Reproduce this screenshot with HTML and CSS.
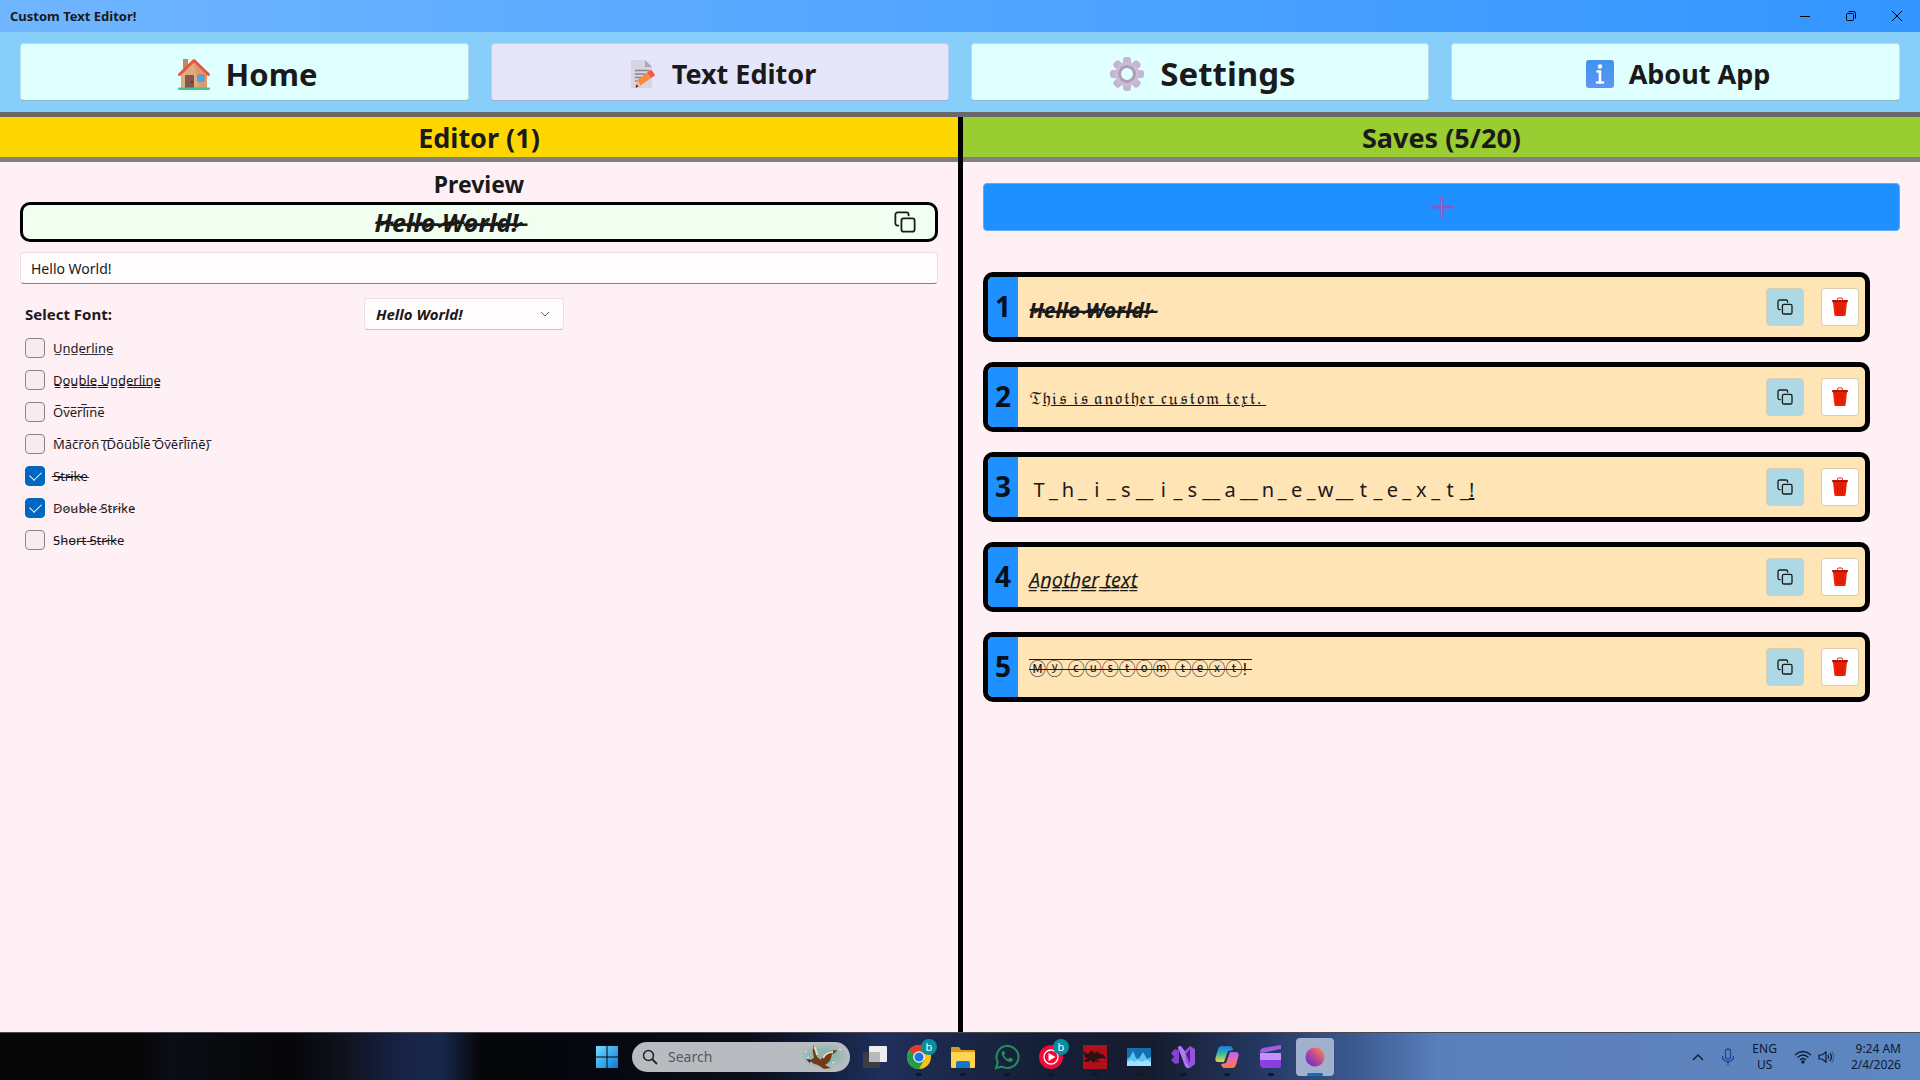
FILE: index.html
```html
<!DOCTYPE html>
<html lang="en">
<head>
<meta charset="utf-8">
<title>Custom Text Editor!</title>
<link rel="stylesheet" href="styles.css">
</head>
<body>
<svg class="defs" aria-hidden="true">
  <symbol id="copy" viewBox="0 0 16 16"><path d="M3.2 10.6H2.6A1.6 1.6 0 0 1 1 9V2.600A1.600 1.600 0 0 1 2.600 1H9a1.600 1.600 0 0 1 1.600 1.600v.6" fill="none" stroke="currentColor" stroke-width="1.300" stroke-linecap="round"/><rect x="5.400" y="5.400" width="9.600" height="9.600" rx="1.600" fill="none" stroke="currentColor" stroke-width="1.300"/></symbol>
  <symbol id="trash" viewBox="0 0 18 20"><path d="M6.500 3.500V2.200Q6.500 1 7.700 1h2.600q1.200 0 1.200 1.200v1.300" fill="none" stroke="#e0201a" stroke-width="1"/><path d="M2 5h14l-1.400 13q-.1 1-1.200 1H4.600q-1.100 0-1.200-1z" fill="#f12000"/><path d="M6.200 7l.5 10M9 7v10M11.800 7l-.5 10" stroke="#c81a05" stroke-width="1"/><rect x="1" y="3" width="16" height="2.200" rx="1" fill="#b5160a"/></symbol>
</svg>
<div class="window">
  <header class="titlebar">
    <span>Custom Text Editor!</span>
    <div class="window-controls">
      <button aria-label="Minimize"><svg width="12" height="12" viewBox="0 0 12 12"><path d="M1 6.500h10" stroke="#000"/></svg></button>
      <button aria-label="Restore"><svg width="12" height="12" viewBox="0 0 12 12" fill="none" stroke="#000"><rect x="1.500" y="3.500" width="7" height="7" rx="1"/><path d="M3.500 1.500h5q2 0 2 2v5"/></svg></button>
      <button aria-label="Close"><svg width="12" height="12" viewBox="0 0 12 12"><path d="M1 1l10 10M11 1L1 11" stroke="#000"/></svg></button>
    </div>
  </header>
  <nav class="nav">
    <button class="nav-button large"><svg width="34" height="34" viewBox="0 0 34 34"><path d="M6 2h5v12H6z" fill="#c38a62"/><path d="M4 17L17 5l13 12v14H4z" fill="#dfab80"/><path d="M17 5l13 12v14h-8z" fill="#d79c70"/><path d="M2.500 17.500L17 3.500l14.500 14" fill="none" stroke="#e6553f" stroke-width="3" stroke-linecap="round" stroke-linejoin="round"/><path d="M8 31V19q0-1 1-1h7q1 0 1 1v12z" fill="#84564c"/><circle cx="15" cy="25" r="1" fill="#4e2f2b"/><rect x="20.500" y="17.500" width="7" height="7" rx="1" fill="#3fa9f2" stroke="#c9835c"/><rect x="1" y="30.500" width="32" height="2.500" rx="1" fill="#43c590"/></svg>Home</button>
    <button class="nav-button selected"><svg width="28" height="30" viewBox="0 0 28 30"><path d="M2 1h14l7 7v21H2z" fill="#d8d5e0"/><path d="M16 1l7 7h-7z" fill="#aba5b5"/><path d="M6 11.500h14M6 15h12M6 18.500h8M6 22h6" stroke="#7f8794" stroke-width="1.400"/><path d="M7 28l1.500-7L18 13.500l4 5.500-11 8z" fill="#fb8a3c"/><path d="M7 28l1.500-7 3 5.500z" fill="#f8c28f"/><path d="M18 13.500l3.500-2.500q2 0 4.500 5.500L22 19z" fill="#f9573f"/><path d="M6.500 29l1-4 2 2.500z" fill="#4a3540"/></svg>Text Editor</button>
    <button class="nav-button larger"><svg width="36" height="36" viewBox="0 0 36 36"><g fill="#c4b6d2"><rect x="14" y="1" width="8" height="34" rx="3"/><rect x="14" y="1" width="8" height="34" rx="3" transform="rotate(45 18 18)"/><rect x="14" y="1" width="8" height="34" rx="3" transform="rotate(90 18 18)"/><rect x="14" y="1" width="8" height="34" rx="3" transform="rotate(135 18 18)"/></g><circle cx="18" cy="18" r="12" fill="#cabdd8"/><circle cx="18" cy="18" r="7.500" fill="#e0ffff" stroke="#ab9fb6" stroke-width="3"/></svg>Settings</button>
    <button class="nav-button"><svg width="28" height="28" viewBox="0 0 28 28"><defs><linearGradient id="info" x2="0" y2="1"><stop stop-color="#3f93ea"/><stop offset="1" stop-color="#5b95f5"/></linearGradient></defs><rect width="28" height="28" rx="3" fill="url(#info)"/><circle cx="14" cy="6.500" r="2.200" fill="#fff"/><path d="M11.500 11.500H14v11M11 22.500h6" fill="none" stroke="#fff" stroke-width="2.600" stroke-linecap="round"/></svg>About App</button>
  </nav>
  <main class="panes">
    <section class="pane">
      <h2 class="pane-title gold">Editor (1)</h2>
      <div class="editor">
        <h3>Preview</h3>
        <div class="preview"><output data-marks="&#x336;&#x337;">Hello World!</output><button aria-label="Copy preview"><svg width="22" height="22"><use href="#copy"/></svg></button></div>
        <input class="source" type="text" value="Hello World!" aria-label="Text">
        <div class="font-row">
          <label for="font">Select Font:</label>
          <div class="select"><select id="font"><option>Hello World!</option></select><svg width="10" height="6" viewBox="0 0 10 6"><path d="M1 1l4 4 4-4" fill="none" stroke="#666"/></svg></div>
        </div>
        <div class="options">
          <label><input type="checkbox"><span data-marks="&#x332;">Underline</span></label>
          <label><input type="checkbox"><span data-marks="&#x333;">Double Underline</span></label>
          <label><input type="checkbox"><span data-marks="&#x305;">Overline</span></label>
          <label><input type="checkbox"><span data-marks="&#x304;">Macron (Double Overline)</span></label>
          <label><input type="checkbox" checked><span data-marks="&#x336;">Strike</span></label>
          <label><input type="checkbox" checked><span data-marks="&#x337;">Double Strike</span></label>
          <label><input type="checkbox"><span data-marks="&#x335;">Short Strike</span></label>
        </div>
      </div>
    </section>
    <section class="pane saves-pane">
      <h2 class="pane-title green">Saves (5/20)</h2>
      <div class="saves">
        <button class="add" aria-label="Add"><svg width="24" height="24" viewBox="0 0 24 24"><path d="M12 2v20M2 12h20" stroke="#8659c4" stroke-width="3" stroke-linecap="round"/><path d="M11.500 2v20" stroke="#a56fc0" stroke-width="1"/></svg></button>
        <ol class="cards">
          <li class="card"><b>1</b><span class="text bold-italic" data-marks="&#x336;&#x337;">Hello World!</span><button class="copy" aria-label="Copy"><svg width="16" height="16"><use href="#copy"/></svg></button><button class="delete" aria-label="Delete"><svg width="18" height="20"><use href="#trash"/></svg></button></li>
          <li class="card"><b>2</b><span class="text fraktur">𝔗<u>𝔥𝔦𝔰 𝔦𝔰 𝔞𝔫𝔬𝔱𝔥𝔢𝔯 𝔠𝔲𝔰𝔱𝔬𝔪 𝔱𝔢𝔵𝔱. </u></span><button class="copy" aria-label="Copy"><svg width="16" height="16"><use href="#copy"/></svg></button><button class="delete" aria-label="Delete"><svg width="18" height="20"><use href="#trash"/></svg></button></li>
          <li class="card"><b>3</b><span class="text" data-cells>T_h_i_s__i_s__a__n_e_w__t_e_x_t_!</span><button class="copy" aria-label="Copy"><svg width="16" height="16"><use href="#copy"/></svg></button><button class="delete" aria-label="Delete"><svg width="18" height="20"><use href="#trash"/></svg></button></li>
          <li class="card"><b>4</b><span class="text italic" data-marks="&#x333;">Another text</span><button class="copy" aria-label="Copy"><svg width="16" height="16"><use href="#copy"/></svg></button><button class="delete" aria-label="Delete"><svg width="18" height="20"><use href="#trash"/></svg></button></li>
          <li class="card"><b>5</b><span class="text circled"><s>Ⓜⓨ ⓒⓤⓢⓣⓞⓜ ⓣⓔⓧⓣ! </s></span><button class="copy" aria-label="Copy"><svg width="16" height="16"><use href="#copy"/></svg></button><button class="delete" aria-label="Delete"><svg width="18" height="20"><use href="#trash"/></svg></button></li>
        </ol>
      </div>
    </section>
  </main>
</div>
<footer class="taskbar">
  <div></div>
  <div class="apps">
    <button class="app" aria-label="Start"><svg width="24" height="24" viewBox="0 0 24 24"><defs><linearGradient id="win" x2="1" y2="1"><stop stop-color="#6fdcff"/><stop offset="1" stop-color="#0a7bdc"/></linearGradient></defs><path d="M1 1h10.500v10.500H1zM12.500 1H23v10.500H12.500zM1 12.500h10.500V23H1zM12.500 12.500H23V23H12.500z" fill="url(#win)"/></svg></button>
    <label class="search"><svg width="16" height="16" viewBox="0 0 16 16"><circle cx="6.500" cy="6.500" r="5" fill="none" stroke="#222" stroke-width="1.500"/><path d="M10 10l5 5" stroke="#222" stroke-width="1.800"/></svg><input type="text" placeholder="Search"><svg width="48" height="28" viewBox="0 0 48 28"><defs><radialGradient id="sky"><stop offset=".5" stop-color="#8bb7b1"/><stop offset="1" stop-color="#8bb7b1" stop-opacity="0"/></radialGradient></defs><ellipse cx="25" cy="13" rx="24" ry="13" fill="url(#sky)"/><path d="M6 8l2 1M8 15l2-1M40 6l2 1M33 20l3-1" stroke="#d7eeea"/><path d="M14 2q3 5 4 12l4 3q2-9 16-10-1 3-5 4-1 8-7 11l6 3-7 1-6-4q-6-1-8-5l4-2q-2-7-1-13z" fill="#743919"/><path d="M18 12q-1-6-3-8M24 15q3-6 10-6" stroke="#f0d9bd" stroke-width="2" fill="none"/><path d="M12 17l-5-1 4 4z" fill="#35190f"/></svg></label>
    <button class="app" aria-label="Task view"><svg width="24" height="24" viewBox="0 0 24 24"><rect y="7" width="17" height="16" rx="1" fill="#3b3d42"/><rect x="6" y="1" width="18" height="16" rx="1" fill="#eee"/><rect x="6" y="7" width="11" height="10" fill="#b9b9bb"/></svg></button>
    <button class="app running" aria-label="Chrome"><svg width="24" height="24" viewBox="0 0 24 24"><circle cx="12" cy="12" r="12" fill="#fbc116"/><path d="M12 12L1.600 6A12 12 0 0 1 22.400 6z" fill="#e33b2e"/><path d="M12 12L1.600 6A12 12 0 0 0 12 24l5.200-9z" fill="#229b4b"/><circle cx="12" cy="12" r="5.800" fill="#fff"/><circle cx="12" cy="12" r="4.600" fill="#1a73e8"/></svg><i>b</i></button>
    <button class="app running" aria-label="File Explorer"><svg width="24" height="24" viewBox="0 0 24 24"><path d="M0 3q0-1 1-1h7l2 3h13q1 0 1 1v8H0z" fill="#dc9b13"/><path d="M0 7h24v15q0 1-1 1H1q-1 0-1-1z" fill="#ffd451"/><path d="M5 23v-5q0-2 2-2h10q2 0 2 2v5z" fill="#1477c8"/></svg></button>
    <button class="app running" aria-label="WhatsApp"><svg width="26" height="26" viewBox="0 0 26 26"><path d="M2 24l1.700-6A11 11 0 1 1 8 22.500z" fill="none" stroke="#208f5c" stroke-width="2"/><path d="M9 7q-2 1-1 4 3 6 8 7 3 0 3-3l-3-1.500-2 1.500q-3-1-4-4l1.200-1.500L10 7z" fill="#208f5c"/></svg></button>
    <button class="app running" aria-label="YouTube Music"><svg width="24" height="24" viewBox="0 0 24 24"><circle cx="12" cy="12" r="12" fill="#f30a37"/><circle cx="12" cy="12" r="7" fill="none" stroke="#fff" stroke-width="1.300"/><path d="M9.500 8l7 4-7 4z" fill="#fff"/></svg><i>b</i></button>
    <button class="app running" aria-label="Dragon"><svg width="24" height="24" viewBox="0 0 24 24"><path d="M0 0h24v24H0z" fill="#b00f1c"/><path d="M0 6l5 3 4-4 2 3 5-2-1 2 6 2 2 4-4-1-3 1-3 0 5 4-6-2-2 2-2-3-3 2-5-1 5-3-3 0z" fill="#2b1215"/></svg></button>
    <button class="app running" aria-label="Monitor"><svg width="24" height="24" viewBox="0 0 24 24"><rect y="3" width="24" height="18" rx="1" fill="#156fae"/><path d="M0 14l3-2 3-6 3 7 2 1 2-2 3-5 4 7 4-2v9H0z" fill="#5bc1f2"/><path d="M0 17l4-2 3 2 4-2 4 2 4-2 5 2v4H0z" fill="#9ee2ff"/></svg></button>
    <button class="app running" aria-label="Visual Studio"><svg width="24" height="24" viewBox="0 0 24 24"><path d="M0 8l4-4 4 1v13l-4 1-4-4 3-3z" fill="#8542cd"/><path d="M8 5q-3-4 2-4l13 17-5 5q-2 1-4-2z" fill="#b37af2"/><path d="M14 6l5-5 5 3v15l-5 4-4-6z" fill="#9752dc"/><path d="M15 9l4-5v14z" fill="#472081"/></svg></button>
    <button class="app running" aria-label="Copilot"><svg width="24" height="24" viewBox="0 0 24 24"><defs><linearGradient id="cp1" x2="0" y2="1"><stop stop-color="#2073df"/><stop offset=".5" stop-color="#36bca5"/><stop offset="1" stop-color="#f5d23d"/></linearGradient><linearGradient id="cp2" x2="0" y2="1"><stop stop-color="#ae66ef"/><stop offset=".5" stop-color="#f069a1"/><stop offset="1" stop-color="#fa7a3d"/></linearGradient></defs><path d="M6 1h9q2 0 3 4l-5 1-4 11H3q-4 0-2-6l2-7q1-3 3-3z" fill="url(#cp1)"/><path d="M18 23H9q-2 0-3-4l5-1 4-11h6q4 0 2 6l-2 7q-1 3-3 3z" fill="url(#cp2)"/></svg></button>
    <button class="app running" aria-label="Clipchamp"><svg width="24" height="24" viewBox="0 0 24 24"><path d="M1 7q0-3 3-4l18-3v4L3 8z" fill="#a45be6"/><path d="M1 8h21v7H1z" fill="#c490fb"/><path d="M1 15h21v6q0 2-2 2H4q-3 0-3-4z" fill="#8a3fe0"/></svg></button>
    <button class="app active" aria-label="Custom Text Editor"><svg width="20" height="20" viewBox="0 0 20 20"><defs><linearGradient id="orb" x1="1" y1="0" x2="0" y2="1"><stop stop-color="#fc9b38"/><stop offset=".5" stop-color="#bf4695"/><stop offset="1" stop-color="#4a2de1"/></linearGradient></defs><circle cx="10" cy="10" r="9.500" fill="url(#orb)"/></svg></button>
  </div>
  <div class="tray">
    <svg width="12" height="8" viewBox="0 0 12 8"><path d="M1 7l5-5 5 5" fill="none" stroke="#0b1a30" stroke-width="1.400"/></svg>
    <svg width="14" height="18" viewBox="0 0 14 18" fill="none" stroke="#174b9c" stroke-width="1.300"><rect x="4.500" y="1" width="5" height="10" rx="2.500"/><path d="M1.500 8q0 5.500 5.500 5.500T12.500 8M7 13.500V17"/></svg>
    <div class="lang">ENG<br>US</div>
    <div class="status">
    <svg width="18" height="14" viewBox="0 0 18 14" fill="none" stroke="#0b1a30" stroke-width="1.300"><path d="M1 5q8-7 16 0M3.500 7.500q5.500-5 11 0M6 10q3-3 6 0"/><circle cx="9" cy="12" r="1" fill="#0b1a30"/></svg>
    <svg width="16" height="14" viewBox="0 0 16 14" fill="none" stroke="#0b1a30" stroke-width="1.200"><path d="M1 5h3l4-3v10L4 9H1zM10 5q1.500 2 0 4M12 3q3 4 0 8"/><path d="M14 1.500q3.500 5.500 0 11" opacity=".35"/></svg>
    </div>
    <div class="clock">9:24 AM<br>2/4/2026</div>
  </div>
</footer>
<script src="script.js"></script>
</body>
</html>
```
FILE: styles.css
```css
* { box-sizing: border-box; }
body { margin: 0; min-height: 100vh; display: flex; flex-direction: column; font: 14px/20px "Noto Sans", "DejaVu Sans", "Noto Sans CJK JP", sans-serif; color: #1a1a1a; }
button { font: inherit; color: inherit; padding: 0; border: 0; background: none; display: flex; align-items: center; justify-content: center; }
h2, h3 { margin: 0; text-align: center; }
.defs { display: none; }
.window { flex: 1; display: flex; flex-direction: column; background: #fff0f5; }
.titlebar { height: 32px; padding-left: 10px; display: flex; align-items: center; justify-content: space-between; font-size: 13px; font-weight: 700; background: linear-gradient(90deg, #70b5ff, #3395ff); }
.window-controls { display: flex; }
.window-controls button { width: 46px; height: 32px; }
.nav { height: 85px; padding: 11px 20px; display: grid; grid-template-columns: 449fr 458fr 458fr 449fr; gap: 22px; background: #87cefa; border-bottom: 5px solid #696969; }
.nav-button { height: 58px; padding: 3px 0 0 5px; gap: 15px; border: 1px solid #b9dfe6; border-bottom-color: #8fb9c5; border-radius: 4px; background: #e0ffff; font-size: 27px; font-weight: 700; }
.nav-button.selected { background: #e6e6fa; border-color: #c2cdeb; border-bottom-color: #9fb2ce; }
.nav-button.large { font-size: 31px; }
.nav-button.larger { font-size: 33px; }
.panes { flex: 1; display: grid; grid-template-columns: calc(50% - 2px) 1fr; }
.saves-pane { border-left: 5px solid #000; }
.pane-title { height: 45px; line-height: 42px; font-size: 27px; border-bottom: 5px solid #808080; }
.gold { background: #ffd700; }
.green { background: #9acd32; }
.editor { padding: 8px 20px; }
h3 { height: 32px; font-size: 23px; line-height: 28px; }
.preview { height: 40px; display: grid; grid-template-columns: 1fr auto; align-items: center; padding-right: 19px; border: 3px solid #000; border-radius: 10px; background: #f0fff0; }
.preview output { padding-right: 24px; text-align: center; font-size: 25px; line-height: 34px; font-weight: 700; font-style: italic; }
.source { width: 100%; height: 32px; margin-top: 10px; padding: 0 10px; border: 1px solid #eadfe4; border-bottom-color: #868084; border-radius: 4px; background: #fffcfd; font: inherit; color: inherit; display: block; }
.font-row { display: grid; grid-template-columns: 344px 200px; align-items: center; margin-top: 14px; }
.font-row label { padding-left: 5px; font-size: 15px; font-weight: 700; }
.select { display: grid; align-items: center; }
.select > * { grid-area: 1 / 1; }
.select svg { justify-self: end; margin-right: 14px; }
.select select { appearance: none; width: 100%; height: 32px; padding: 0 11px; border: 1px solid #eadfe4; border-bottom-color: #ccc2c7; border-radius: 4px; background: #fffcfd; color: inherit; font: italic 700 15px "Noto Sans", sans-serif; }
.options { padding: 2px 5px; }
.options label { height: 32px; display: flex; align-items: center; gap: 8px; font-size: 13px; }
.options input { appearance: none; width: 20px; height: 20px; margin: 0; border: 1px solid #8b8487; border-radius: 4px; background: #f8eaf0; display: grid; place-items: center; }
.options input:checked { background: #0067c0; border-color: #0067c0; }
.options input:checked::before { content: ""; width: 10px; height: 6px; margin-bottom: 3px; border: solid #fff; border-width: 0 0 1px 1px; transform: rotate(-45deg); }
.saves { padding: 21px 20px; }
.add { width: 100%; height: 48px; border: 1px solid #5eacf5; border-radius: 4px; background: #1e90ff; }
.cards { list-style: none; margin: 41px 30px 0 0; padding: 0; display: grid; gap: 20px; }
.card { height: 70px; display: flex; align-items: center; padding-right: 6px; border: 5px solid #000; border-radius: 10px; background: #ffe4b5; }
.card b { align-self: stretch; width: 30px; border-radius: 5px 0 0 5px; background: #1e90ff; color: #04101c; text-align: center; font-size: 28px; line-height: 58px; }
.card .text { flex: 1; padding: 5px 0 0 11px; font-size: 20px; line-height: 28px; white-space: pre; }
.card button { width: 38px; height: 38px; border: 1px solid #dccfaf; border-radius: 4px; }
.card .copy { background: #add8e6; margin-right: 17px; }
.card .delete { background: #fff; }
.card .bold-italic { font-size: 21px; font-weight: 700; font-style: italic; }
.italic { font-style: italic; }
.card .fraktur { font-family: "DejaVu Math TeX Gyre", "DejaVu Sans", serif; font-size: 15px; }
.card .circled { font-family: "Liberation Sans", "Noto Sans CJK JP", sans-serif; font-size: 17px; }
.circled s { text-decoration: overline line-through; }
.cell { display: inline-block; width: 1em; text-align: center; }
.taskbar { height: 48px; display: grid; grid-template-columns: 1fr auto 1fr; align-items: center; border-top: 1px solid #4a4a55; background: linear-gradient(90deg, #070707 0, #060607 7%, #0a0d14 9%, #060608 15%, #10131f 18%, #172347 21%, #17284c 23%, #060708 25%, #060710 31%, #0b0d18 39%, #13203f 43%, #202f5c 46%, #1b2747 50%, #151f38 54%, #161c2f 60%, #263a65 66%, #3e5d94 71%, #5a80bb 75%, #5d80bb 83%, #5d88c1 100%); }
.apps { display: flex; align-items: center; padding-left: 2px; }
.app { position: relative; width: 44px; height: 47px; }
.app i { position: absolute; right: 4px; top: 6px; width: 16px; height: 16px; border-radius: 50%; background: #0b8d9e; color: #fff; font: 11px/15px "Noto Sans", sans-serif; text-align: center; }
.app.running::after { content: ""; position: absolute; bottom: 4px; left: 19px; width: 6px; height: 3px; border-radius: 2px; background: #111725; }
.app.active { width: 38px; height: 38px; margin: 0 3px; border-radius: 4px; background: #a1b0cc; }
.app.active::after { content: ""; position: absolute; bottom: 0; left: 11px; width: 16px; height: 3px; border-radius: 2px; background: #0d70c4; }
.search { width: 218px; height: 30px; margin: 0 3px; padding: 0 3px 0 10px; border-radius: 15px; background: #b8bbbf; display: flex; align-items: center; gap: 10px; }
.search input { flex: 1; min-width: 0; border: 0; padding: 0; background: none; font: inherit; }
.search input::placeholder { color: #55585c; }
.tray { justify-self: end; display: flex; align-items: center; padding-right: 19px; gap: 17px; font-size: 12px; line-height: 16px; color: #0b1a30; }
.lang { text-align: center; }
.status { display: flex; gap: 6px; }
.clock { text-align: right; }
```
FILE: script.js
```js
// Appends the combining marks in data-marks to every character of the element's text.
document.querySelectorAll("[data-marks]").forEach((el) => {
  el.textContent = Array.from(el.textContent, (c) => c + el.dataset.marks).join("");
});

// Sets each letter of a data-cells text in a full-width cell; the underscores stay narrow.
document.querySelectorAll("[data-cells]").forEach((el) => {
  el.innerHTML = el.textContent
    .replace(/[a-z]/gi, '<span class="cell">$&</span>')
    .replace("!", "<u>!</u>");
});
```
